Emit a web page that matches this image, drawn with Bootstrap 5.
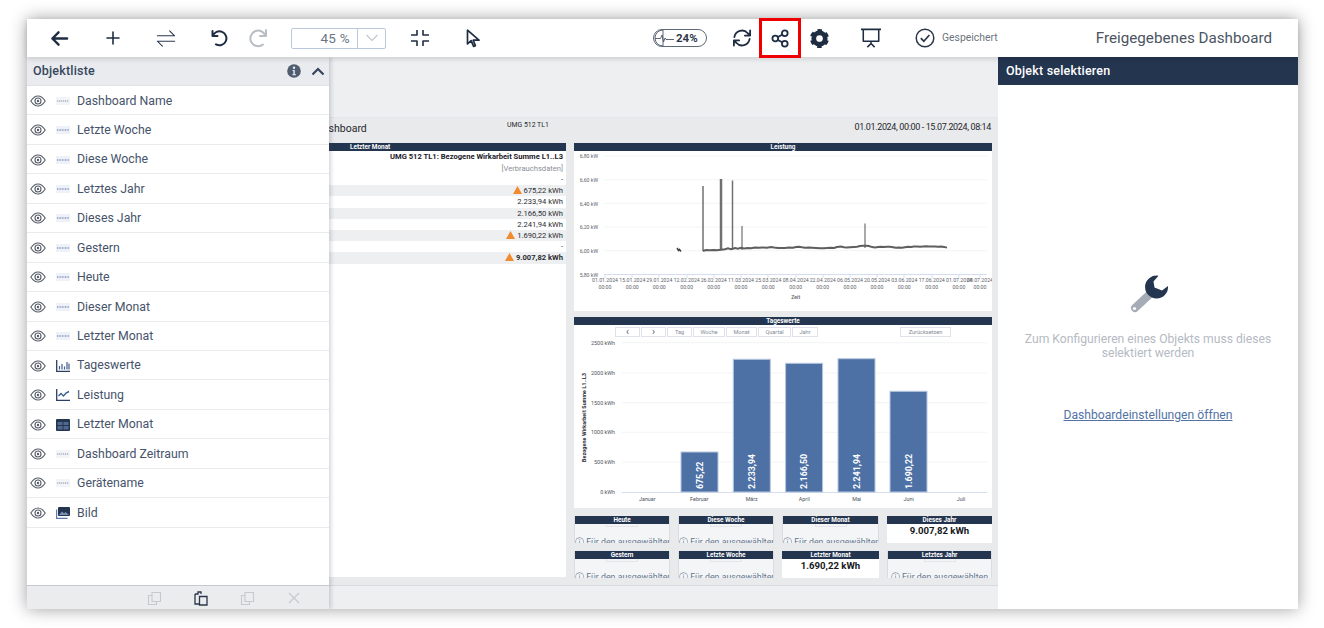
<!DOCTYPE html>
<html lang="de">
<head>
<meta charset="utf-8">
<title>Freigegebenes Dashboard</title>
<link rel="stylesheet" href="https://cdn.jsdelivr.net/npm/bootstrap@5.3.0/dist/css/bootstrap.min.css">
<style>
html,body{height:100%;overflow:hidden;background:#fff;}
body{font-family:Roboto,"Liberation Sans",sans-serif;padding:19px 26px 19px 27px;color:#3d4a5c;}
.app-frame{height:590px;box-shadow:0 0 16px rgba(0,0,0,.38);background:#fff;}
.top-tools{height:38px;flex:none;position:relative;z-index:3;background:#fff;box-shadow:0 2px 5px rgba(0,0,0,.14);}
.tool-slot{width:36px;height:38px;flex:none;}
.tool-slot svg{display:block;}
.ico{fill:none;stroke:#1f2d42;stroke-width:2;stroke-linecap:round;stroke-linejoin:round;}
.ml-14{margin-left:14px}.ml-18{margin-left:18px}.ml-17{margin-left:17px}.ml-3px{margin-left:3px}.ml-15{margin-left:15px}.ml-16{margin-left:16px}.ml-19{margin-left:19px}
.ml-162{margin-left:162px}
.zoom-box{width:95px;height:21px;flex:none;border:1px solid #b9c8db;border-radius:2px;font-size:13.5px;color:#6c7684;}
.zoom-val{width:65px;text-align:right;padding-right:7px;letter-spacing:.3px;line-height:19px;}
.zoom-drop{border-left:1px solid #b9c8db;}
.mem-pill{width:54px;height:18px;flex:none;border:1px solid #5d6977;border-radius:9px;font-size:11.5px;font-weight:700;color:#2e3a4b;padding-left:22px;line-height:16px;position:relative;}
.mem-pill svg{position:absolute;left:0;top:-1px;}
.slot-narrow{width:34px;}
.share-box{width:42px;height:40px;flex:none;border:3px solid #ee0000;margin-top:-1px;margin-bottom:-1px;}
.saved-txt{width:56px;flex:none;font-size:10.4px;color:#6d7580;white-space:nowrap;}
.dash-title{font-size:15.2px;color:#4b5462;margin-right:26px;white-space:nowrap;}
.obj-panel{width:302px;flex:none;position:relative;z-index:2;background:#fff;box-shadow:2px 0 4px rgba(60,70,90,.22);}
.obj-head{height:29px;flex:none;background:#e9ebee;font-size:12.5px;font-weight:500;color:#36465c;padding:0 4px 0 6px;letter-spacing:.2px;border-bottom:1px solid #dfe1e4;}
.info-gap{margin-right:10px;}
.obj-row{height:29.45px;flex:none;border-bottom:1px solid #e9eaec;padding:1px 0 0 3px;font-size:12.3px;color:#46536a;}
.obj-row svg{flex:none;}
.obj-kind{margin-left:10px;margin-right:7px;}
.obj-foot{height:24px;flex:none;background:#ebecee;border-top:1px solid #c5c8cd;}
.foot-i{position:absolute;top:5px;}
.canvas-area{background:#eeeff1;min-width:0;}
.canvas-spacer{height:60px;flex:none;}
.dash-sheet{height:468px;flex:none;background:#e9eaec;border-top:1px solid #e4e5e8;}
.dash-top{height:25px;flex:none;color:#26282c;padding-right:7px;}
.dash-name{font-size:10.5px;margin-left:-13px;width:52px;flex:none;white-space:nowrap;margin-top:-3px;}
.dash-dev{font-size:6.9px;margin-left:139px;margin-top:-10px;white-space:nowrap;}
.dash-range{font-size:9px;letter-spacing:-.37px;margin-left:auto;margin-top:-6px;white-space:nowrap;}
.dash-body{display:grid;grid-template-columns:237px 418px;gap:8px;}
.wid-bar{height:8px;background:#243550;color:#fff;font-size:6.4px;font-weight:700;line-height:8px;text-align:center;white-space:nowrap;flex:none;}
.table-wid{height:434px;background:#fff;}
.wid-bar-left{text-align:left;padding-left:21px;}
.val-row{height:11.2px;font-size:7.6px;line-height:11.2px;text-align:right;padding-right:3px;color:#2a2d33;}
.val-alt{background:#eeeff0;}
.val-title{font-weight:700;font-size:7.6px;color:#1c2027;height:12px;line-height:12px;}
.val-sub{color:#8a8f97;height:11px;}
.val-bold{font-weight:700;}
.warn-i{display:inline-block;vertical-align:-1px;margin-right:2px;}
.right-stack{display:flex;flex-direction:column;}
.wid-power{height:168px;background:#fff;flex:none;margin-bottom:6px;}
.wid-days{height:191px;background:#fff;flex:none;margin-bottom:8px;}
.chart-btns{height:13px;padding:2px 0 0 41px;flex:none;}
.mini-btn{height:10px;border:1px solid #dfe3e9;font-size:5.6px;line-height:8px;color:#838b97;text-align:center;padding:0;border-radius:0;background:#fff;margin-right:1px;}
.w-prev{width:25px;font-size:10px;line-height:6px;color:#555c68;}.w-tag{width:25px}.w-woche{width:32px}.w-monat{width:31px}.w-quartal{width:33px}.w-jahr{width:26px}.w-reset{width:51px;margin-left:81px}
.chart-svg{display:block;}
.kpi-grid{display:grid;grid-template-columns:96px 96px 97px 105px;gap:8px;}
.kpi-item{height:27px;overflow:hidden;background:#f4f5f7;border:solid #dadce0;border-width:0 1px;}
.kpi-item .wid-bar{margin:0 -1px;height:8px;}
.kpi-strip{width:32px;height:3px;border:1px solid #e3e5e8;border-top:0;margin:0 auto;}
.kpi-note{font-size:8.8px;color:#66778f;white-space:nowrap;text-align:center;line-height:12px;margin-top:9px;}
.kpi-value{background:#fff;border:0;}
.kpi-num{font-size:9.6px;font-weight:700;color:#15181d;text-align:center;line-height:11px;margin-top:1px;}
.canvas-foot{flex:1;border-top:1px solid #d9dadd;background:#eeeff1;}
.cfg-panel{width:300px;flex:none;background:#fff;position:relative;z-index:2;}
.cfg-head{height:28px;background:#243550;color:#fff;font-size:12.5px;font-weight:500;line-height:28px;padding-left:8px;letter-spacing:.2px;flex:none;}
.cfg-icon{margin:188px 0 0 3px;}
.cfg-msg{font-size:12.15px;color:#b5bac3;line-height:14px;margin-top:17px;padding:0 20px;}
.cfg-link{color:#5373a5;font-size:12.15px;margin-top:46px;}
svg text{font-family:Roboto,"Liberation Sans",sans-serif;}
</style>
</head>
<body>
<div class="app-frame d-flex flex-column">
  <header class="top-tools d-flex align-items-center">
    <div class="tool-slot ml-14 d-flex align-items-center justify-content-center"><svg width="19" height="19" viewBox="0 0 20 20"><path class="ico" d="M18 10H2.500M9 3.500 2.500 10 9 16.500" style="stroke-width:2.500"/></svg></div>
    <div class="tool-slot ml-18 d-flex align-items-center justify-content-center"><svg width="14" height="14" viewBox="0 0 14 14"><path class="ico" d="M7 1v12M1 7h12" style="stroke-width:1.600"/></svg></div>
    <div class="tool-slot ml-17 d-flex align-items-center justify-content-center"><svg width="20" height="19" viewBox="0 0 22 20"><path class="ico" style="stroke-width:1.200;stroke:#2b3a50" d="M1.500 7H20.500L15 1.500M20.500 13H1.500L7 18.500"/></svg></div>
    <div class="tool-slot ml-17 d-flex align-items-center justify-content-center"><svg width="18" height="18" viewBox="0 0 18 18"><path class="ico" d="M2.500 2v5h5M2.800 7A7 7 0 1 1 6 15.400"/></svg></div>
    <div class="tool-slot ml-3px d-flex align-items-center justify-content-center"><svg width="20" height="20" viewBox="0 0 20 20"><path class="ico" style="stroke:#b9bdc4" d="M18 2v6h-6M17.600 8A7.800 7.800 0 1 0 15 16.500"/></svg></div>
    <div class="zoom-box ml-15 d-flex">
      <div class="zoom-val">45 %</div>
      <div class="zoom-drop flex-grow-1 d-flex align-items-center justify-content-center"><svg width="14" height="8" viewBox="0 0 14 8"><path d="M1.500 1 7 6.500 12.500 1" fill="none" stroke="#c2c6cc" stroke-width="1.200"/></svg></div>
    </div>
    <div class="tool-slot ml-16 d-flex align-items-center justify-content-center"><svg width="20" height="18" viewBox="0 0 20 18"><path class="ico" style="stroke-width:1.600;stroke-linecap:butt" d="M1 6h6V1M19 6h-6V1M1 12h6v5M19 12h-6v5"/></svg></div>
    <div class="tool-slot ml-17 d-flex align-items-center justify-content-center"><svg width="14" height="19" viewBox="0 0 14 19"><path class="ico" style="stroke-width:1.700" d="M1.500 1.200V15l3.600-3.400 2.500 5.800 1.800-.8-2.200-5.400H13Z"/></svg></div>
    <div class="mem-pill ml-162">24%<svg width="22" height="18" viewBox="0 0 22 18"><path d="M9 1A8 8 0 0 0 9 17M9 1V17" fill="none" stroke="#5d6977"/><path d="M1 9.500H6.500L8 6l1.500 7L11 9l1 1.500H20" fill="none" stroke="#4b5666" stroke-width=".9"/></svg></div>
    <div class="tool-slot slot-narrow ml-18 d-flex align-items-center justify-content-center"><svg width="20" height="20" viewBox="0 0 21 21"><path class="ico" style="stroke-width:1.900" d="M2.500 9.500A8 8 0 0 1 16.500 5.500L19 8M19 2.500V8h-5.500M18.500 11.500A8 8 0 0 1 4.500 15.500L2 13M2 18.500V13h5.500"/></svg></div>
    <div class="share-box d-flex align-items-center justify-content-center"><svg width="19" height="19" viewBox="0 0 20 20"><g class="ico" style="stroke-width:1.900"><circle cx="14.500" cy="4.500" r="3"/><circle cx="4.500" cy="10" r="3"/><circle cx="14.500" cy="15.500" r="3"/><path d="M7.200 8.500 11.800 6M7.200 11.500l4.600 2.500"/></g></svg></div>
    <div class="tool-slot d-flex align-items-center justify-content-center"><svg width="21" height="21" viewBox="-11 -11 22 22"><circle r="6" fill="none" stroke="#1f2d42" stroke-width="5"/><circle r="8.200" fill="none" stroke="#1f2d42" stroke-width="3.600" stroke-dasharray="4.500 4.080" stroke-dashoffset="-2.040"/></svg></div>
    <div class="tool-slot ml-16 d-flex align-items-center justify-content-center"><svg width="22" height="20" viewBox="0 0 24 22"><path class="ico" style="stroke-width:1.700;stroke-linecap:butt" d="M1 1.500H23M3.500 1.500V14.500H20.500V1.500M12 14.500V18M12 17l-4 4M12 17l4 4"/></svg></div>
    <div class="tool-slot slot-narrow ml-19 d-flex align-items-center justify-content-center"><svg width="20" height="20" viewBox="0 0 20 20"><circle cx="10" cy="10" r="8.800" fill="none" stroke="#2a3649" stroke-width="1.500"/><path d="M5.800 10.200 8.800 13.200 14.400 7" fill="none" stroke="#2a3649" stroke-width="1.700"/></svg></div>
    <div class="saved-txt">Gespeichert</div>
    <div class="dash-title ms-auto">Freigegebenes Dashboard</div>
  </header>

  <main class="d-flex flex-grow-1 overflow-hidden">
    <aside class="obj-panel d-flex flex-column">
      <div class="obj-head d-flex align-items-center">
        <span class="flex-grow-1">Objektliste</span>
        <svg width="14" height="14" viewBox="0 0 14 14" class="info-gap"><circle cx="7" cy="7" r="6.800" fill="#4f5d70"/><circle cx="7" cy="3.700" r="1.200" fill="#e9ebee"/><path d="M5.600 6h2.200v4.300H9v1H5.300v-1h1.100V7H5.600Z" fill="#e9ebee"/></svg>
        <svg width="14" height="9" viewBox="0 0 14 9"><path d="M1.500 7.500 7 2l5.500 5.500" fill="none" stroke="#36465c" stroke-width="2.200"/></svg>
      </div>
      <svg width="0" height="0" class="position-absolute"><defs>
        <symbol id="eye" viewBox="0 0 16 12"><path d="M.8 6C3 2.600 5.300 1 8 1s5 1.600 7.200 5C13 9.400 10.700 11 8 11S3 9.400.8 6Z" fill="none" stroke="#565d68" stroke-width="1.100"/><circle cx="8" cy="6" r="3" fill="none" stroke="#565d68" stroke-width="1.100"/><circle cx="8" cy="6" r="1.200" fill="#565d68"/></symbol>
        <symbol id="dash" viewBox="0 0 14 8"><rect width="14" height="8" fill="#f2f4f8"/><path d="M1 4h12" stroke="#7f8ba0" stroke-width=".9" stroke-dasharray="1.300 .7"/></symbol>
        <symbol id="dash2" viewBox="0 0 14 8"><rect width="14" height="8" fill="#eef1f8"/><path d="M1 4h12" stroke="#8d9dc0" stroke-width="1.300" stroke-dasharray="1 .6"/></symbol>
        <symbol id="bars" viewBox="0 0 14 12"><path d="M.7 0v11.300H14" fill="none" stroke="#2b3f63" stroke-width="1.300"/><path d="M3.500 6v3.500M6 4v5.500M8.500 6.500v3M11 2v7.500M13 3.500v6" stroke="#3f5d8e" stroke-width="1.200"/></symbol>
        <symbol id="line" viewBox="0 0 14 12"><path d="M.7 0v11.300H14" fill="none" stroke="#2b3f63" stroke-width="1.300"/><path d="M2.500 7 5 4.500 7.500 7 10 4l3-1.500" fill="none" stroke="#3f5d8e" stroke-width="1.400"/></symbol>
        <symbol id="tbl" viewBox="0 0 14 12"><rect width="14" height="12" rx="1" fill="#243550"/><path d="M1.500 3h5v3h-5zM7.500 3h5v3h-5zM1.500 7h5v3.500h-5zM7.500 7h5v3.500h-5z" fill="#51688f"/></symbol>
        <symbol id="pic" viewBox="0 0 14 12"><rect x="2" y="0" width="12" height="9" rx="1" fill="#243550"/><path d="M3 8 6 4.500l2 2 1.500-1.500L13 8Z" fill="#7e93b5"/><path d="M.6 2.500v8.800h11" fill="none" stroke="#5e7cab" stroke-width="1.200"/></symbol>
      </defs></svg>
      <div class="obj-row d-flex align-items-center"><svg width="16" height="12"><use href="#eye"/></svg><svg class="obj-kind" width="14" height="8"><use href="#dash"/></svg>Dashboard Name</div>
      <div class="obj-row d-flex align-items-center"><svg width="16" height="12"><use href="#eye"/></svg><svg class="obj-kind" width="14" height="8"><use href="#dash2"/></svg>Letzte Woche</div>
      <div class="obj-row d-flex align-items-center"><svg width="16" height="12"><use href="#eye"/></svg><svg class="obj-kind" width="14" height="8"><use href="#dash2"/></svg>Diese Woche</div>
      <div class="obj-row d-flex align-items-center"><svg width="16" height="12"><use href="#eye"/></svg><svg class="obj-kind" width="14" height="8"><use href="#dash2"/></svg>Letztes Jahr</div>
      <div class="obj-row d-flex align-items-center"><svg width="16" height="12"><use href="#eye"/></svg><svg class="obj-kind" width="14" height="8"><use href="#dash2"/></svg>Dieses Jahr</div>
      <div class="obj-row d-flex align-items-center"><svg width="16" height="12"><use href="#eye"/></svg><svg class="obj-kind" width="14" height="8"><use href="#dash2"/></svg>Gestern</div>
      <div class="obj-row d-flex align-items-center"><svg width="16" height="12"><use href="#eye"/></svg><svg class="obj-kind" width="14" height="8"><use href="#dash2"/></svg>Heute</div>
      <div class="obj-row d-flex align-items-center"><svg width="16" height="12"><use href="#eye"/></svg><svg class="obj-kind" width="14" height="8"><use href="#dash2"/></svg>Dieser Monat</div>
      <div class="obj-row d-flex align-items-center"><svg width="16" height="12"><use href="#eye"/></svg><svg class="obj-kind" width="14" height="8"><use href="#dash2"/></svg>Letzter Monat</div>
      <div class="obj-row d-flex align-items-center"><svg width="16" height="12"><use href="#eye"/></svg><svg class="obj-kind" width="14" height="12"><use href="#bars"/></svg>Tageswerte</div>
      <div class="obj-row d-flex align-items-center"><svg width="16" height="12"><use href="#eye"/></svg><svg class="obj-kind" width="14" height="12"><use href="#line"/></svg>Leistung</div>
      <div class="obj-row d-flex align-items-center"><svg width="16" height="12"><use href="#eye"/></svg><svg class="obj-kind" width="14" height="12"><use href="#tbl"/></svg>Letzter Monat</div>
      <div class="obj-row d-flex align-items-center"><svg width="16" height="12"><use href="#eye"/></svg><svg class="obj-kind" width="14" height="8"><use href="#dash"/></svg>Dashboard Zeitraum</div>
      <div class="obj-row d-flex align-items-center"><svg width="16" height="12"><use href="#eye"/></svg><svg class="obj-kind" width="14" height="8"><use href="#dash"/></svg>Gerätename</div>
      <div class="obj-row d-flex align-items-center"><svg width="16" height="12"><use href="#eye"/></svg><svg class="obj-kind" width="14" height="12"><use href="#pic"/></svg>Bild</div>
      <div class="flex-grow-1"></div>
      <div class="obj-foot position-relative">
        <svg class="foot-i" style="left:120px" width="15" height="15" viewBox="0 0 15 15"><path d="M5 1.500h8.500v9H5zM5 4.500H1.500v9H9.500V10.500" fill="none" stroke="#c6c9ce" stroke-width="1.100"/></svg>
        <svg class="foot-i" style="left:167px" width="14" height="15" viewBox="0 0 14 15"><path d="M1 3h3V1h3v2M1 3v10h4M5.500 5.500h7.500v8.500H5.500z" fill="none" stroke="#2a3649" stroke-width="1.300"/></svg>
        <svg class="foot-i" style="left:213px" width="15" height="15" viewBox="0 0 15 15"><path d="M5 1.500h8.500v9H5zM5 4.500H1.500v9H9.500V10.500" fill="none" stroke="#c6c9ce" stroke-width="1.100"/></svg>
        <svg class="foot-i" style="left:261px" width="12" height="14" viewBox="0 0 12 14"><path d="M1 2l10 10M11 2 1 12" fill="none" stroke="#c6c9ce" stroke-width="1.300"/></svg>
      </div>
    </aside>

    <section class="canvas-area flex-grow-1 d-flex flex-column overflow-hidden">
      <div class="canvas-spacer"></div>
      <div class="dash-sheet d-flex flex-column">
        <div class="dash-top d-flex align-items-center">
          <span class="dash-name">Dashboard</span>
          <span class="dash-dev">UMG 512 TL1</span>
          <span class="dash-range">01.01.2024, 00:00 - 15.07.2024, 08:14</span>
        </div>
        <div class="dash-body">
          <div class="table-wid d-flex flex-column">
            <div class="wid-bar wid-bar-left">Letzter Monat</div>
            <div class="val-row val-title">UMG 512 TL1: Bezogene Wirkarbeit Summe L1..L3</div>
            <div class="val-row val-sub">[Verbrauchsdaten]</div>
            <div class="val-row">-</div>
            <div class="val-row val-alt"><svg class="warn-i" width="9" height="8" viewBox="0 0 9 8"><path d="M4.500 0 9 8H0Z" fill="#f28a2e"/></svg>675,22 kWh</div>
            <div class="val-row">2.233,94 kWh</div>
            <div class="val-row val-alt">2.166,50 kWh</div>
            <div class="val-row">2.241,94 kWh</div>
            <div class="val-row val-alt"><svg class="warn-i" width="9" height="8" viewBox="0 0 9 8"><path d="M4.500 0 9 8H0Z" fill="#f28a2e"/></svg>1.690,22 kWh</div>
            <div class="val-row">-</div>
            <div class="val-row val-alt val-bold"><svg class="warn-i" width="9" height="8" viewBox="0 0 9 8"><path d="M4.500 0 9 8H0Z" fill="#f28a2e"/></svg>9.007,82 kWh</div>
          </div>
          <div class="right-stack">
            <div class="wid-power">
              <div class="wid-bar">Leistung</div>
              <svg class="chart-svg" width="418" height="160" viewBox="0 0 418 160">
                <g stroke="#f3f4f6" stroke-width="1"><path d="M30 5H413M30 28.700H413M30 52.300H413M30 76H413M30 99.700H413"/></g>
                <path d="M30 123.500H413" stroke="#d5def0"/>
                <g stroke="#d5def0"><path d="M31 123v4M58 123v4M85 123v4M113 123v4M140 123v4M167 123v4M194 123v4M222 123v4M249 123v4M276 123v4M303 123v4M330 123v4M358 123v4M385 123v4M406 123v4"/></g>
                <g font-size="5.200" fill="#5d626b" text-anchor="end"><text x="24" y="7">6,80 kW</text><text x="24" y="31">6,60 kW</text><text x="24" y="54.500">6,40 kW</text><text x="24" y="78">6,20 kW</text><text x="24" y="102">6,00 kW</text><text x="24" y="125.500">5,80 kW</text></g>
                <g font-size="5.200" fill="#5d626b" text-anchor="middle">
                  <text x="31" y="131">01.01.2024</text><text x="58.300" y="131">15.01.2024</text><text x="85.300" y="131">29.01.2024</text><text x="112.700" y="131">12.02.2024</text><text x="139.700" y="131">26.02.2024</text><text x="167" y="131">11.03.2024</text><text x="194.300" y="131">25.03.2024</text><text x="221.700" y="131">08.04.2024</text><text x="248.700" y="131">22.04.2024</text><text x="276" y="131">06.05.2024</text><text x="303" y="131">20.05.2024</text><text x="330.300" y="131">03.06.2024</text><text x="357.700" y="131">17.06.2024</text><text x="385" y="131">01.07.2024</text><text x="406" y="131">08.07.2024</text>
                  <text x="31" y="138">00:00</text><text x="58.300" y="138">00:00</text><text x="85.300" y="138">00:00</text><text x="112.700" y="138">00:00</text><text x="139.700" y="138">00:00</text><text x="167" y="138">00:00</text><text x="194.300" y="138">00:00</text><text x="221.700" y="138">00:00</text><text x="248.700" y="138">00:00</text><text x="276" y="138">00:00</text><text x="303" y="138">00:00</text><text x="330.300" y="138">00:00</text><text x="357.700" y="138">00:00</text><text x="385" y="138">00:00</text><text x="406" y="138">00:00</text>
                  <text x="221.700" y="148" font-weight="500">Zeit</text>
                </g>
                <path d="M103 97l1.500 2.500 1-1 1.500 2" fill="none" stroke="#444" stroke-width="1.500"/>
                <g fill="none" stroke="#707070">
                  <path stroke-width="1.500" d="M129 100V35"/><path stroke-width="2.500" d="M147 99V28"/><path stroke-width="1.500" d="M158.500 99V29.500"/><path stroke-width="1.200" d="M168 99V75"/><path stroke-width="1.200" d="M291 97V72.500"/>
                  <path stroke="#5e5e5e" stroke-width="2" d="M129 100l3-1 4 .3 4-.3 3 .3 4-.6 4-.4 3-1 3 .8 4-1 3 .6 3-1 3 .8 4-.6 3 .3 4-.8 4 .4 4-.4 4 .3 4-.7 3 .6 4 .4 3 .1 4-.2 4-.4 4 .2 3-.7 3-.2 3 .5 3 .4 4-.2 3 .2 4 .2 4 .4 4-.1 3-.2 4-.2 3 .2 3-1 4-.4 3 .6 3 .4 3-.4 4-.2 3-.2 3-.7 3-.4 3 .1 3 .3 3 1 3 .3 3-.4 3-.3 3 .2 3-.2 3 .1 3 .4 3 .5 3-.2 3 .3 3-.5 3-.5 3 .2 3-.4 3-.1 3 .2 3-.3 3-.1 3 .2 3 .1 3-.2 3 .3 3-.1 3 .3 3 .7"/>
                </g>
              </svg>
            </div>
            <div class="wid-days d-flex flex-column">
              <div class="wid-bar">Tageswerte</div>
              <div class="chart-btns d-flex">
                <button class="mini-btn w-prev" type="button">‹</button><button class="mini-btn w-prev" type="button">›</button><button class="mini-btn w-tag" type="button">Tag</button><button class="mini-btn w-woche" type="button">Woche</button><button class="mini-btn w-monat" type="button">Monat</button><button class="mini-btn w-quartal" type="button">Quartal</button><button class="mini-btn w-jahr" type="button">Jahr</button><button class="mini-btn w-reset" type="button">Zurücksetzen</button>
              </div>
              <svg class="chart-svg" width="418" height="170" viewBox="0 0 418 170">
                <path stroke="#f3f4f6" d="M47.700 4.700H413M47.700 35H413M47.700 64.700H413M47.700 94.300H413M47.700 124H413"/>
                <path stroke="#d5def0" d="M47.700 154.500H413"/>
                <g font-size="5.400" fill="#4e535b" text-anchor="end"><text x="41" y="6.700">2500 kWh</text><text x="41" y="37">2000 kWh</text><text x="41" y="66.700">1500 kWh</text><text x="41" y="96.300">1000 kWh</text><text x="41" y="126">500 kWh</text><text x="41" y="156">0 kWh</text></g>
                <text transform="translate(12 79.500) rotate(-90)" font-size="5.200" font-weight="700" fill="#20242b" text-anchor="middle" textLength="89" lengthAdjust="spacing">Bezogene Wirkarbeit Summe L1..L3</text>
                <g fill="#4d71a5" stroke="#b7c6dd"><rect x="107" y="114" width="37" height="40"/><rect x="159.300" y="21.300" width="37" height="132.700"/><rect x="211.600" y="25.300" width="37" height="128.700"/><rect x="264" y="20.700" width="37" height="133.300"/><rect x="316" y="53.300" width="37" height="100.700"/></g>
                <g font-size="8.800" font-weight="700" fill="#fff"><text transform="translate(128.500 151) rotate(-90)">675,22</text><text transform="translate(180.800 151) rotate(-90)">2.233,94</text><text transform="translate(233.100 151) rotate(-90)">2.166,50</text><text transform="translate(285.500 151) rotate(-90)">2.241,94</text><text transform="translate(337.500 151) rotate(-90)">1.690,22</text></g>
                <g font-size="5.400" fill="#4e535b" text-anchor="middle"><text x="73.300" y="162.500">Januar</text><text x="125.300" y="162.500">Februar</text><text x="177.700" y="162.500">März</text><text x="230.300" y="162.500">April</text><text x="282.700" y="162.500">Mai</text><text x="334.700" y="162.500">Juni</text><text x="387" y="162.500">Juli</text></g>
              </svg>
            </div>
            <div class="kpi-grid">
              <div class="kpi-item"><div class="wid-bar">Heute</div><div class="kpi-strip"></div><div class="kpi-note">ⓘ Für den ausgewählten</div></div>
              <div class="kpi-item"><div class="wid-bar">Diese Woche</div><div class="kpi-strip"></div><div class="kpi-note">ⓘ Für den ausgewählten</div></div>
              <div class="kpi-item"><div class="wid-bar">Dieser Monat</div><div class="kpi-strip"></div><div class="kpi-note">ⓘ Für den ausgewählten</div></div>
              <div class="kpi-item kpi-value"><div class="wid-bar">Dieses Jahr</div><div class="kpi-num">9.007,82 kWh</div></div>
              <div class="kpi-item"><div class="wid-bar">Gestern</div><div class="kpi-strip"></div><div class="kpi-note">ⓘ Für den ausgewählten</div></div>
              <div class="kpi-item"><div class="wid-bar">Letzte Woche</div><div class="kpi-strip"></div><div class="kpi-note">ⓘ Für den ausgewählten</div></div>
              <div class="kpi-item kpi-value"><div class="wid-bar">Letzter Monat</div><div class="kpi-num">1.690,22 kWh</div></div>
              <div class="kpi-item"><div class="wid-bar">Letztes Jahr</div><div class="kpi-strip"></div><div class="kpi-note">ⓘ Für den ausgewählten</div></div>
            </div>
          </div>
        </div>
      </div>
      <div class="canvas-foot"></div>
    </section>

    <aside class="cfg-panel d-flex flex-column align-items-center">
      <div class="cfg-head w-100">Objekt selektieren</div>
      <svg class="cfg-icon" width="42" height="42" viewBox="0 0 42 42">
        <path d="M21 21 6 35" stroke="#a6acb6" stroke-width="8" stroke-linecap="round"/>
        <circle cx="5.500" cy="35.500" r="1.600" fill="#fff"/>
        <path d="M29.500 2.700A11.500 11.500 0 1 0 39 13L33 17.500 25.500 14.500 24.500 8.500Z" fill="#243550"/>
      </svg>
      <div class="cfg-msg text-center">Zum Konfigurieren eines Objekts muss dieses selektiert werden</div>
      <a class="cfg-link" href="#">Dashboardeinstellungen öffnen</a>
    </aside>
  </main>
</div>
<script src="https://cdn.jsdelivr.net/npm/bootstrap@5.3.0/dist/js/bootstrap.bundle.min.js"></script>
</body>
</html>
